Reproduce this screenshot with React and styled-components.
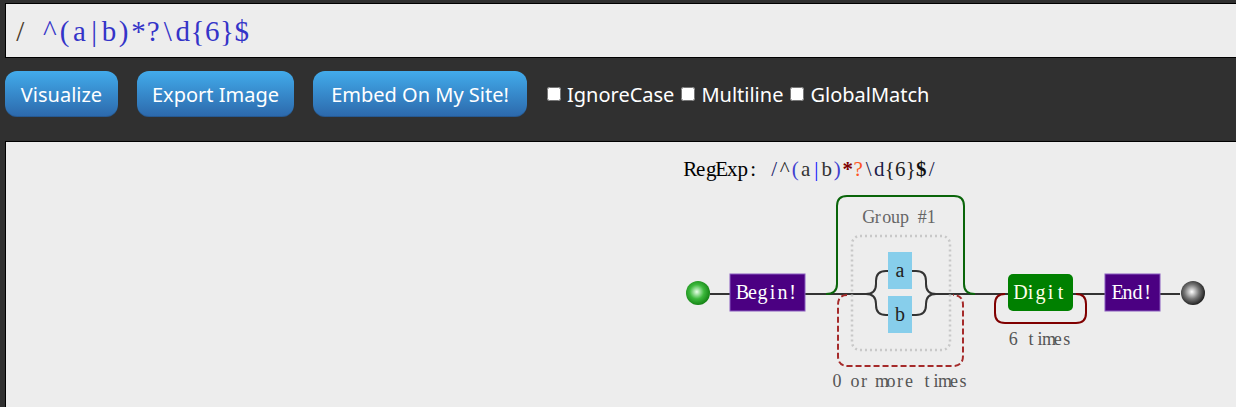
import React from "react";
import styled, { createGlobalStyle } from "styled-components";

const GlobalStyle = createGlobalStyle`
  html, body {
    margin: 0;
    padding: 0;
    background: #303030;
    overflow: hidden;
  }
  #root {
    width: 1236px;
    height: 407px;
    overflow: hidden;
  }
`;

const SERIF = `"Liberation Serif", "DejaVu Serif", serif`;

const Page = styled.div`
  display: flex;
  flex-direction: column;
  height: 407px;
  padding-top: 3px;
  box-sizing: border-box;
`;

const RegexInput = styled.div`
  margin-left: 5px;
  width: 1300px;
  height: 55px;
  box-sizing: border-box;
  border: 1px solid #000;
  background: #ededed;
  display: flex;
  align-items: center;
  padding: 2px 0 0 7px;
  font-family: ${SERIF};
  font-size: 29px;
  color: #3434c8;
`;

// fixed-pitch cell so a serif face behaves like the monospace original
const Cell = styled.span`
  display: inline-block;
  width: 14.75px;
  text-align: center;
  color: ${(p) => p.$color || "inherit"};
`;

const Toolbar = styled.div`
  display: flex;
  align-items: center;
  gap: 19px;
  padding: 13px 0 24px 5px;
  font-family: "Noto Sans", "Open Sans", sans-serif;
`;

const Button = styled.button`
  width: ${(p) => p.$w}px;
  height: 46px;
  padding: 0;
  border: none;
  border-radius: 12px;
  background: linear-gradient(to bottom, #42abeb, #2c68ab);
  color: #fff;
  font-family: inherit;
  font-size: 20px;
  cursor: pointer;
  box-shadow: inset 0 -1px 0 rgba(0, 0, 0, 0.15);
`;

const Options = styled.div`
  display: flex;
  align-items: center;
  gap: 7px;
  margin-left: 1px;
  color: #fff;
  font-size: 20px;
`;

const Check = styled.label`
  display: flex;
  align-items: center;
  gap: 6px;

  input {
    margin: 0;
    width: 14px;
    height: 14px;
  }
`;

const Canvas = styled.div`
  flex: 1;
  margin-left: 5px;
  border-left: 1px solid #000;
  border-top: 1px solid #000;
  background: #ededed;
  overflow: hidden;
`;

const Diagram = styled.svg`
  display: block;
  font-family: ${SERIF};
`;

// draws text with one glyph per fixed cell; x is the left edge of the first cell
const MonoText = ({ x, y, pitch, size, parts, anchor = "start" }) => {
  const total = parts.reduce((n, p) => n + p.t.length, 0);
  let start = x;
  if (anchor === "middle") start = x - (total * pitch) / 2;
  let i = 0;
  return (
    <text y={y} fontSize={size} textAnchor="middle">
      {parts.map((p, k) => {
        const xs = [...p.t].map(() => (start + (i++ + 0.5) * pitch).toFixed(2)).join(" ");
        return (
          <tspan key={k} x={xs} fill={p.c || "#222"} fontWeight={p.b ? "bold" : "normal"}>
            {p.t}
          </tspan>
        );
      })}
    </text>
  );
};

const Line = ({ d }) => <path d={d} fill="none" stroke="#333" strokeWidth="2" />;

const Node = ({ x, y, w, h, fill, stroke, rx = 0, label, color = "#fff", pitch = 10 }) => (
  <g>
    <rect x={x} y={y} width={w} height={h} rx={rx} fill={fill} stroke={stroke} strokeWidth="1" />
    <MonoText
      x={x + w / 2}
      y={y + h / 2 + 6.5}
      pitch={pitch}
      size={20}
      anchor="middle"
      parts={[{ t: label, c: color }]}
    />
  </g>
);

const RailroadDiagram = () => (
  <Diagram width="1230" height="263" viewBox="6 143 1230 263">
    <defs>
      <radialGradient id="startGrad" cx="0.45" cy="0.45" r="0.6">
        <stop offset="0" stopColor="#e8ffe8" />
        <stop offset="0.5" stopColor="#3cb83c" />
        <stop offset="1" stopColor="#0e7a0e" />
      </radialGradient>
      <radialGradient id="endGrad" cx="0.45" cy="0.45" r="0.6">
        <stop offset="0" stopColor="#ffffff" />
        <stop offset="0.5" stopColor="#777" />
        <stop offset="1" stopColor="#111" />
      </radialGradient>
    </defs>

    <MonoText
      x={685}
      y={177}
      pitch={10.5}
      size={21}
      parts={[
        { t: "RegExp: ", c: "#000" },
        { t: "/", c: "#1a1a6a" },
        { t: "^", c: "#222" },
        { t: "(", c: "#4040d0" },
        { t: "a", c: "#333" },
        { t: "|", c: "#1010ff" },
        { t: "b", c: "#333" },
        { t: ")", c: "#4040d0" },
        { t: "*", c: "#800000", b: true },
        { t: "?", c: "#ff5522" },
        { t: "\\d", c: "#1a1a4a" },
        { t: "{6}", c: "#222" },
        { t: "$", c: "#111", b: true },
        { t: "/", c: "#1a1a4a" },
      ]}
    />

    {/* main line */}
    <Line d="M 710 295 L 1180 295" />

    {/* group #1 */}
    <path
      d="M 826 295 Q 837 295 837 285 L 837 207 Q 837 197 847 197 L 954 197 Q 964 197 964 207 L 964 285 Q 964 295 975 295"
      fill="none"
      stroke="#0a650a"
      strokeWidth="2"
    />
    <MonoText x={900} y={224} pitch={8.9} size={18} anchor="middle" parts={[{ t: "Group #1", c: "#666" }]} />
    <rect
      x="852"
      y="237"
      width="98"
      height="114"
      rx="8"
      fill="none"
      stroke="#c8c8c8"
      strokeWidth="2.5"
      strokeDasharray="2 3"
    />

    {/* 0 or more loop */}
    <path
      d="M 847 296 Q 838 296 838 306 L 838 357 Q 838 367 848 367 L 953 367 Q 963 367 963 357 L 963 306 Q 963 296 953 296"
      fill="none"
      stroke="#a52a2a"
      strokeWidth="2"
      strokeDasharray="6 3"
    />
    <MonoText x={900} y={388} pitch={9} size={18} anchor="middle" parts={[{ t: "0 or more times", c: "#555" }]} />

    {/* branch a | b */}
    <rect x="869" y="290" width="62" height="10" fill="#ededed" />
    <Line d="M 866 295 Q 876 295 876 285 L 876 282 Q 876 272 886 272 L 890 272" />
    <Line d="M 866 295 Q 876 295 876 305 L 876 306 Q 876 316 886 316 L 890 316" />
    <Line d="M 910 272 L 916 272 Q 926 272 926 282 L 926 285 Q 926 295 936 295" />
    <Line d="M 910 316 L 916 316 Q 926 316 926 306 L 926 305 Q 926 295 936 295" />
    <Node x={888} y={253} w={24} h={37} fill="#87ceeb" label="a" color="#222" />
    <Node x={888} y={297} w={24} h={37} fill="#87ceeb" label="b" color="#222" />

    {/* digit loop */}
    <path
      d="M 1005 295 Q 995 295 995 305 L 995 314 Q 995 324 1005 324 L 1076 324 Q 1086 324 1086 314 L 1086 305 Q 1086 295 1076 295"
      fill="none"
      stroke="#800000"
      strokeWidth="2"
    />
    <MonoText x={1040} y={346} pitch={8.9} size={18} anchor="middle" parts={[{ t: "6 times", c: "#555" }]} />

    <circle cx="698" cy="294" r="12" fill="url(#startGrad)" />
    <Node x={730} y={275} w={75} h={37} fill="#4b0082" stroke="#8a5cbf" label="Begin!" />
    <Node x={1008} y={275} w={65} h={37} rx={5} fill="#008000" label="Digit" color="#ffffe8" />
    <Node x={1105} y={275} w={55} h={37} fill="#4b0082" stroke="#8a5cbf" label="End!" />
    <circle cx="1193" cy="294" r="12" fill="url(#endGrad)" />
  </Diagram>
);

const INPUT = "/ ^(a|b)*?\\d{6}$";

export default function App() {
  return (
    <Page>
      <GlobalStyle />
      <RegexInput>
        {[...INPUT].map((ch, i) => (
          <Cell key={i} $color={i === 0 ? "#4a3a2a" : undefined}>
            {ch}
          </Cell>
        ))}
      </RegexInput>
      <Toolbar>
        <Button $w={113}>Visualize</Button>
        <Button $w={157}>Export Image</Button>
        <Button $w={214}>Embed On My Site!</Button>
        <Options>
          <Check>
            <input type="checkbox" />
            IgnoreCase
          </Check>
          <Check>
            <input type="checkbox" />
            Multiline
          </Check>
          <Check>
            <input type="checkbox" />
            GlobalMatch
          </Check>
        </Options>
      </Toolbar>
      <Canvas>
        <RailroadDiagram />
      </Canvas>
    </Page>
  );
}
